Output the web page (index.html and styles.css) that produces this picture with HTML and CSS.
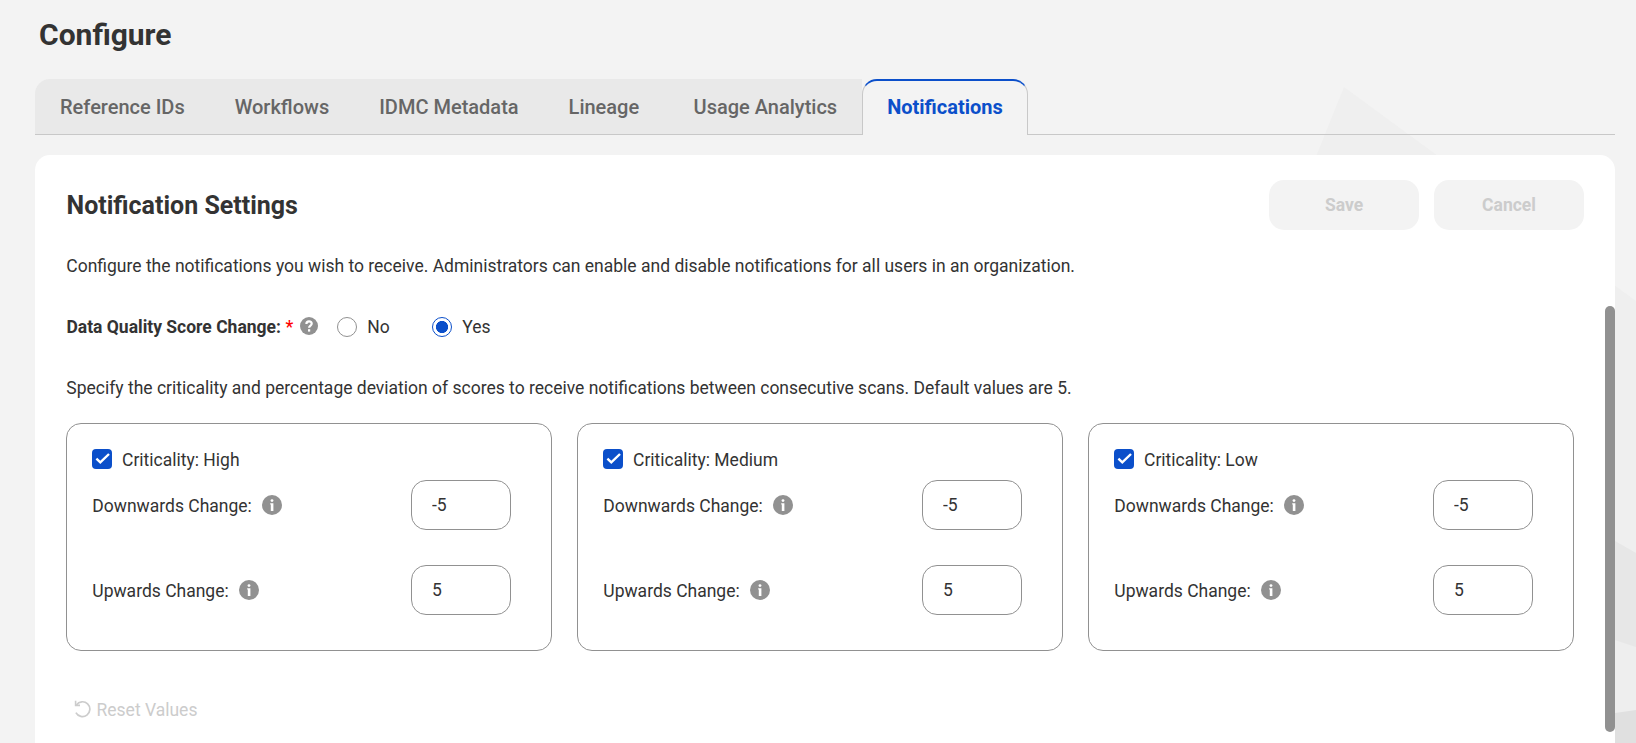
FILE: index.html
```html
<!DOCTYPE html>
<html lang="en">
<head>
<meta charset="UTF-8" />
<meta name="viewport" content="width=device-width, initial-scale=1" />
<title>Configure</title>
<link rel="stylesheet" href="styles.css">
</head>
<body>
  <svg class="backdrop" width="336" height="743" viewBox="0 0 336 743" aria-hidden="true">
    <path d="M44 87L336 301V743H-220Z" fill="#efefef"/>
    <path d="M315 541L336 553V743H315Z" fill="#e7e7e7"/>
    <path d="M315 640L336 647V743H315Z" fill="#eeeeee"/>
    <path d="M315 713L336 710V743H315Z" fill="#e0e0e0"/>
  </svg>

  <!-- shared icons -->
  <svg class="sprite" aria-hidden="true">
    <symbol id="icon-info" viewBox="0 0 20 20">
      <circle cx="10" cy="10" r="10" fill="#919191"/>
      <circle cx="10" cy="5.6" r="1.4" fill="#fff"/>
      <path d="M8.2 8.3H11.4V16H8.8V9.5H8.2Z" fill="#fff"/>
    </symbol>
    <symbol id="icon-help" viewBox="0 0 18 18">
      <circle cx="9" cy="9" r="9" fill="#919191"/>
      <path d="M6.4 6.9C6.4 5.2 7.5 4.3 9 4.3S11.7 5.2 11.7 6.7C11.7 8.5 9.1 8.6 9.1 10.8" fill="none" stroke="#fff" stroke-width="2.2"/>
      <rect x="8" y="12.2" width="2.2" height="2.4" fill="#fff"/>
    </symbol>
    <symbol id="icon-reset" viewBox="0 0 18 18">
      <path d="M2.4 4.9A7.4 7.4 0 1 1 1.9 12.6" fill="none" stroke="#ccc" stroke-width="1.7"/>
      <path d="M1.6 0.8V5.4H6" fill="none" stroke="#ccc" stroke-width="1.6"/>
    </symbol>
  </svg>

  <main class="page">
    <h1>Configure</h1>

    <nav class="tabs">
      <button class="tab">Reference IDs</button>
      <button class="tab">Workflows</button>
      <button class="tab">IDMC Metadata</button>
      <button class="tab">Lineage</button>
      <button class="tab">Usage Analytics</button>
      <button class="tab active">Notifications</button>
      <div class="tabs-rest"></div>
    </nav>

    <section class="panel">
      <div class="panel-head">
        <h2>Notification Settings</h2>
        <div class="actions">
          <button class="btn" disabled>Save</button>
          <button class="btn" disabled>Cancel</button>
        </div>
      </div>

      <p class="intro">Configure the notifications you wish to receive. Administrators can enable and disable notifications for all users in an organization.</p>

      <div class="score-row">
        <span class="score-label">Data Quality Score Change:</span>
        <span class="required">*</span>
        <svg class="help"><use href="#icon-help"/></svg>
        <label class="radio no"><input type="radio" name="score">No</label>
        <label class="radio"><input type="radio" name="score" checked>Yes</label>
      </div>

      <p class="specify">Specify the criticality and percentage deviation of scores to receive notifications between consecutive scans. Default values are 5.</p>

      <div class="cards">
        <div class="card">
          <label class="check">
            <svg class="tick" viewBox="0 0 20 20"><rect width="20" height="20" rx="4" fill="#0b4fca"/><path d="M4.4 9.7L8.3 13.4L17 5" fill="none" stroke="#fff" stroke-width="2.4"/></svg>
            <span>Criticality: High</span>
          </label>
          <div class="field">
            <span>Downwards Change:</span>
            <svg class="info"><use href="#icon-info"/></svg>
            <input type="text" value="-5">
          </div>
          <div class="field">
            <span>Upwards Change:</span>
            <svg class="info"><use href="#icon-info"/></svg>
            <input type="text" value="5">
          </div>
        </div>
        <div class="card">
          <label class="check">
            <svg class="tick" viewBox="0 0 20 20"><rect width="20" height="20" rx="4" fill="#0b4fca"/><path d="M4.4 9.7L8.3 13.4L17 5" fill="none" stroke="#fff" stroke-width="2.4"/></svg>
            <span>Criticality: Medium</span>
          </label>
          <div class="field">
            <span>Downwards Change:</span>
            <svg class="info"><use href="#icon-info"/></svg>
            <input type="text" value="-5">
          </div>
          <div class="field">
            <span>Upwards Change:</span>
            <svg class="info"><use href="#icon-info"/></svg>
            <input type="text" value="5">
          </div>
        </div>
        <div class="card">
          <label class="check">
            <svg class="tick" viewBox="0 0 20 20"><rect width="20" height="20" rx="4" fill="#0b4fca"/><path d="M4.4 9.7L8.3 13.4L17 5" fill="none" stroke="#fff" stroke-width="2.4"/></svg>
            <span>Criticality: Low</span>
          </label>
          <div class="field">
            <span>Downwards Change:</span>
            <svg class="info"><use href="#icon-info"/></svg>
            <input type="text" value="-5">
          </div>
          <div class="field">
            <span>Upwards Change:</span>
            <svg class="info"><use href="#icon-info"/></svg>
            <input type="text" value="5">
          </div>
        </div>
      </div>

      <button class="reset" disabled><svg><use href="#icon-reset"/></svg><span>Reset Values</span></button>

      <div class="scrollbar"></div>
    </section>
  </main>
</body>
</html>
```

FILE: styles.css
```css
* {
  box-sizing: border-box;
}
body {
  margin: 0;
  height: 743px;
  overflow: hidden;
  background: #f3f3f3;
  color: #333;
  font-family: Roboto, "Liberation Sans", sans-serif;
  font-size: 17.5px;
  line-height: 24px;
}
h1, h2, p {
  margin: 0;
}
button, input {
  font-family: inherit;
  font-size: inherit;
  color: inherit;
}
.backdrop {
  position: absolute;
  top: 0;
  right: 0;
  z-index: -1;
}
.sprite {
  display: none;
}
.page {
  display: flex;
  flex-direction: column;
  height: 743px;
  padding: 15px 21px 0 35px;
}
h1 {
  padding-left: 4px;
  font-size: 30px;
  line-height: 40px;
  font-weight: 700;
}

/* tabs */
.tabs {
  display: flex;
  height: 56px;
  margin-top: 24px;
}
.tab {
  min-width: 125px;
  padding: 0 25px;
  border: none;
  border-bottom: 1px solid #c8c8c8;
  background: #e9e9e9;
  color: #666;
  font-size: 20px;
  font-weight: 500;
  text-align: left;
  white-space: nowrap;
}
.tab:first-child {
  border-top-left-radius: 15px;
}
.tab.active {
  padding: 0 24px 2px;
  background: #f3f3f3;
  border: 1px solid #c8c8c8;
  border-top: 2px solid #0b4fca;
  border-bottom: none;
  border-radius: 15px 15px 0 0;
  color: #0b4fca;
  font-weight: 700;
}
.tabs-rest {
  flex: 1;
  border-bottom: 1px solid #c8c8c8;
}

/* panel */
.panel {
  position: relative;
  flex: 1;
  margin-top: 20px;
  padding: 25px 31px 0;
  background: #fff;
  border-radius: 15px 15px 0 0;
}
.panel-head {
  display: flex;
  justify-content: space-between;
  align-items: center;
}
h2 {
  padding: 2px 0 0 0.5px;
  font-size: 25px;
  line-height: 32px;
  font-weight: 700;
}
.actions {
  display: flex;
  gap: 15px;
}
.btn {
  width: 150px;
  height: 50px;
  padding-bottom: 2px;
  border: none;
  border-radius: 15px;
  background: #f3f3f3;
  color: #ccc;
  font-weight: 700;
}
.intro {
  margin-top: 24px;
}
.intro, .specify {
  padding-left: 0.3px;
}
.score-row {
  display: flex;
  align-items: center;
  height: 24px;
  margin-top: 37px;
}
.score-label {
  padding-left: 0.4px;
  font-weight: 700;
}
.required {
  margin-left: 4.5px;
  color: #f00;
  font-weight: 500;
}
.help {
  width: 18px;
  height: 18px;
  margin: 0 19.2px 2px 6.5px;
}
.radio {
  display: flex;
  align-items: center;
}
.radio.no {
  width: 95px;
}
.radio input {
  appearance: none;
  width: 20px;
  height: 20px;
  margin: 0 10.3px 0 0;
  border: 1px solid #919191;
  border-radius: 50%;
}
.radio input:checked {
  border-color: #0b4fca;
  background: radial-gradient(circle, #0b4fca 5.7px, #fff 6.4px);
}
.specify {
  margin-top: 37px;
}

/* criticality cards */
.cards {
  display: grid;
  grid-template-columns: repeat(3, 486px);
  gap: 25px;
  margin-top: 23px;
}
.card {
  height: 228px;
  padding: 25px;
  border: 1px solid #919191;
  border-radius: 15px;
}
.check {
  display: flex;
  align-items: center;
  height: 20px;
}
.check span, .field span {
  padding-top: 2px;
}
.field span {
  padding-left: 0.3px;
}
.tick {
  width: 20px;
  height: 20px;
  margin-right: 10px;
}
.field {
  display: flex;
  align-items: center;
  margin: 11px 15px 35px 0;
}
.field + .field {
  margin-top: 0;
}
.info {
  width: 20px;
  height: 20px;
  margin-left: 10px;
}
.field input {
  width: 100px;
  height: 50px;
  margin-left: auto;
  padding: 0 19px 0 20px;
  border: 1px solid #919191;
  border-radius: 15px;
  background: #fff;
}

.reset {
  display: flex;
  align-items: center;
  height: 24px;
  margin-top: 46px;
  padding: 0 0 0 8px;
  border: none;
  background: none;
  color: #ccc;
}
.reset svg {
  width: 18px;
  height: 18px;
  margin-right: 4.5px;
}
.reset span {
  padding-top: 1px;
}
.scrollbar {
  position: absolute;
  top: 151px;
  right: 0;
  width: 10px;
  height: 426px;
  border-radius: 5px;
  background: #919191;
}
```
